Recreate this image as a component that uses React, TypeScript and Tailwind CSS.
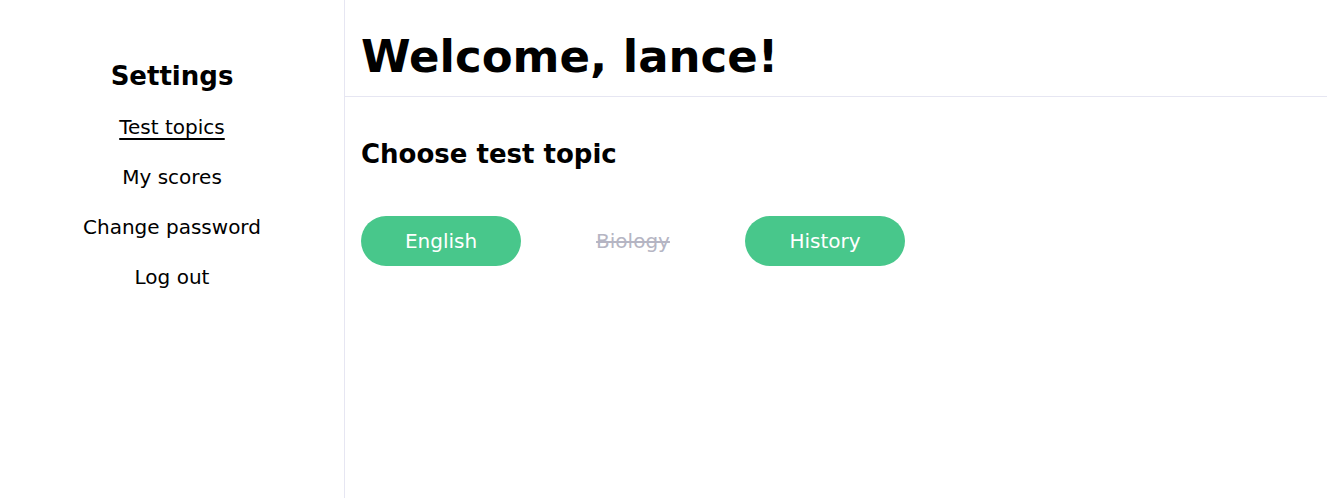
export default function App() {
    const links = ['Test topics', 'My scores', 'Change password', 'Log out'];
    const topics = [
        { name: 'English', enabled: true },
        { name: 'Biology', enabled: false },
        { name: 'History', enabled: true },
    ];

    return (
        <div className="flex h-[498px] bg-white text-black font-['DejaVu_Sans',sans-serif]">
            <aside className="w-[345px] shrink-0 border-r border-[#e6e6f2] flex flex-col items-center pt-[59px]">
                <h2 className="text-[26px] font-bold leading-[34px] mb-[9px]">Settings</h2>
                <nav className="flex flex-col items-center">
                    {links.map((link, i) => (
                        <a
                            key={link}
                            href="#"
                            className={`text-[20px] leading-[50px] ${i === 0 ? 'underline underline-offset-[4px]' : ''}`}
                        >
                            {link}
                        </a>
                    ))}
                </nav>
            </aside>
            <main className="flex-1 flex flex-col">
                <header className="h-[97px] border-b border-[#e6e6f2] px-4 pt-[28px]">
                    <h1 className="text-[45px] font-bold leading-[58px]">Welcome, lance!</h1>
                </header>
                <section className="px-4 pt-[38px]">
                    <h2 className="text-[26px] font-bold leading-[38px]">Choose test topic</h2>
                    <div className="flex gap-8 mt-[43px]">
                        {topics.map((t) => (
                            <button
                                key={t.name}
                                disabled={!t.enabled}
                                className={`w-[160px] h-[50px] rounded-full text-[20px] ${
                                    t.enabled ? 'bg-[#48c78b] text-white' : 'bg-transparent text-[#b5b5c3] line-through'
                                }`}
                            >
                                {t.name}
                            </button>
                        ))}
                    </div>
                </section>
            </main>
        </div>
    )
}
